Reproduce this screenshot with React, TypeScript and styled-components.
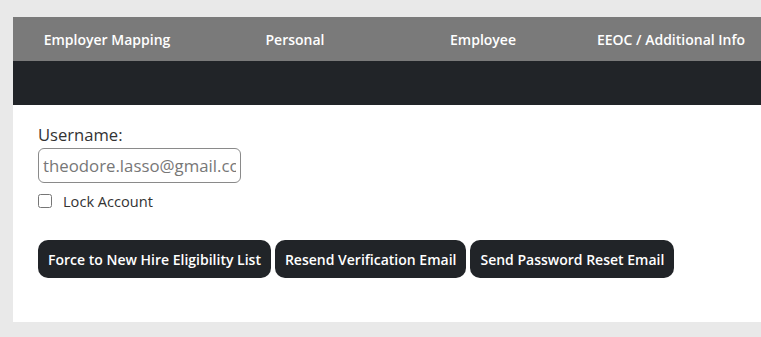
import React from 'react';
import styled, { createGlobalStyle } from 'styled-components';

const Global = createGlobalStyle`
  html, body {
    margin: 0;
    padding: 0;
    background: #e9e9e9;
    overflow: hidden;
  }
  body {
    font-family: "Open Sans", "Liberation Sans", sans-serif;
  }
`

const Page = styled.div`
  padding: 17px 0 15px 13px;
  width: 761px;
  box-sizing: border-box;
`

const Card = styled.div`
  width: 770px;
  background: #ffffff;
`

const Nav = styled.nav`
  display: flex;
  height: 44px;
  background: #7a7a7a;
`

const NavItem = styled.div`
  flex: 0 0 188px;
  display: flex;
  align-items: center;
  justify-content: center;
  color: #ffffff;
  font-size: 14px;
  font-weight: 600;
  white-space: nowrap;
`

const SubBar = styled.div`
  height: 44px;
  background: #212428;
`

const Body = styled.div`
  padding: 17px 25px 44px;
  display: flex;
  flex-direction: column;
`

const Label = styled.label`
  font-size: 16.6px;
  color: #333;
  line-height: 25px;
`

const Input = styled.input`
  width: 203px;
  height: 35px;
  box-sizing: border-box;
  margin-top: 1px;
  border: 1px solid #8a8a8a;
  border-radius: 6px;
  padding: 0 4px;
  font-family: inherit;
  font-size: 16.8px;
  color: #777;
  outline: none;
`

const CheckRow = styled.div`
  display: flex;
  align-items: center;
  margin-top: 9px;
  height: 18px;
`

const Check = styled.input`
  width: 14px;
  height: 14px;
  margin: 0;
`

const CheckLabel = styled.span`
  margin-left: 11px;
  font-size: 14.6px;
  color: #333;
`

const Actions = styled.div`
  display: flex;
  gap: 4px;
  margin-top: 30px;
`

const Button = styled.button`
  height: 38px;
  padding: 0 10px;
  border: none;
  border-radius: 10px;
  background: #212428;
  color: #ffffff;
  font-family: inherit;
  font-size: 14px;
  font-weight: 600;
  white-space: nowrap;
`

const tabs = ['Employer Mapping', 'Personal', 'Employee', 'EEOC / Additional Info']
const actions = ['Force to New Hire Eligibility List', 'Resend Verification Email', 'Send Password Reset Email']

export default function App() {
  return (
    <Page>
      <Global />
      <Card>
        <Nav>
          {tabs.map(t => <NavItem key={t}>{t}</NavItem>)}
        </Nav>
        <SubBar />
        <Body>
          <Label>Username:</Label>
          <Input defaultValue="theodore.lasso@gmail.com" readOnly />
          <CheckRow>
            <Check type="checkbox" />
            <CheckLabel>Lock Account</CheckLabel>
          </CheckRow>
          <Actions>
            {actions.map(a => <Button key={a}>{a}</Button>)}
          </Actions>
        </Body>
      </Card>
    </Page>
  )
}
